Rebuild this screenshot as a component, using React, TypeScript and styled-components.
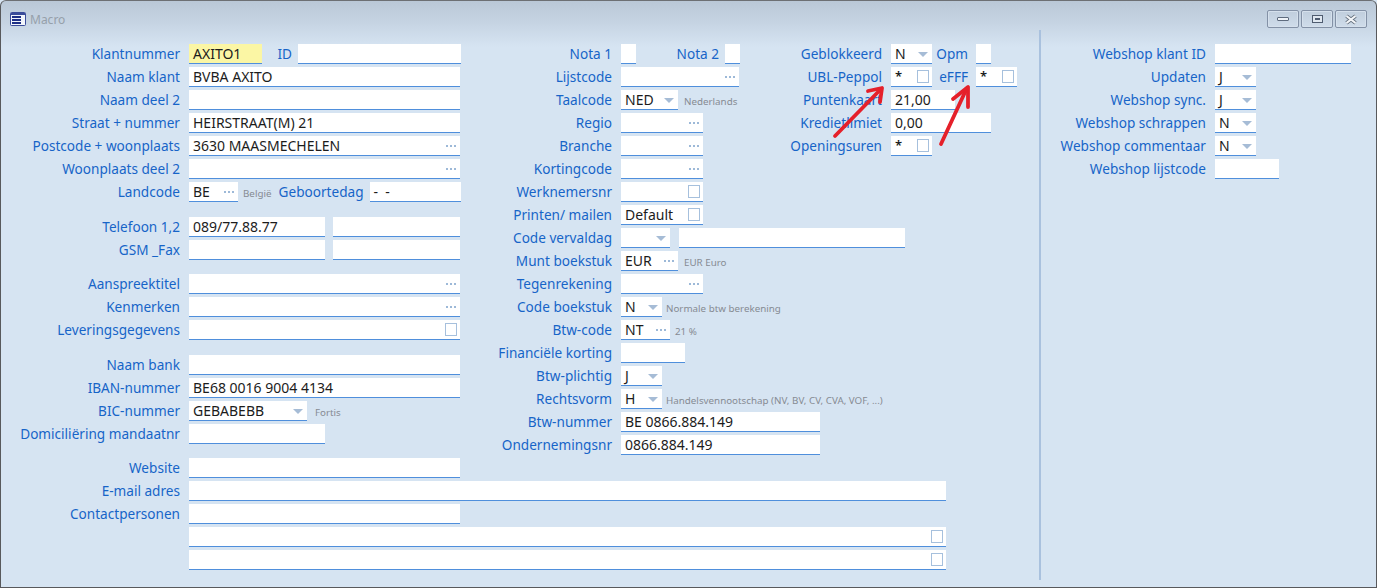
import React, { FunctionComponent, ReactNode } from "react";
import { createGlobalStyle, styled } from "styled-components";

const Global = createGlobalStyle`
  html, body {
    margin: 0;
    padding: 0;
    background: #d6e4f2;
  }
`;

const Window = styled.div`
  position: relative;
  box-sizing: border-box;
  width: 1377px;
  height: 588px;
  overflow: hidden;
  border: 1px solid #58595c;
  border-top-color: #6d7074;
  border-radius: 6px 6px 0 0;
  background: linear-gradient(#bac8d7 0, #c6d4e3 22px, #d6e4f2 46px);
  font-family: "Noto Sans", sans-serif;
  font-size: 13.6px;
`;

const TitleBar = styled.div`
  box-sizing: border-box;
  display: flex;
  align-items: center;
  height: 29px;
  padding: 7px 9px 0;
  gap: 4px;
`;

const Caption = styled.span`
  font-size: 12px;
  color: #96a0aa;
  flex: 1;
`;

const WinButtons = styled.div`
  display: flex;
  gap: 2px;
`;

const WinButton = styled.div`
  box-sizing: border-box;
  display: flex;
  align-items: center;
  justify-content: center;
  width: 32px;
  height: 18px;
  border: 1px solid #8391a6;
  border-radius: 2px;
  background: linear-gradient(#c0cedd, #cfdcea);
  box-shadow: inset 0 0 0 1px #d5e0ec;
`;

const Body = styled.div`
  display: flex;
  align-items: stretch;
  height: 550px;
`;

const FormArea = styled.div`
  display: flex;
  flex-direction: column;
  flex-shrink: 0;
  width: 1038px;
  padding-top: 14px;
  box-sizing: border-box;
`;

const TopColumns = styled.div`
  display: flex;
  margin-bottom: 3px;
`;

const Column = styled.div<{ $w: number }>`
  display: flex;
  flex-direction: column;
  gap: 3px;
  width: ${(p) => p.$w}px;
  flex-shrink: 0;
`;

const Spacer = styled.div<{ $h: number }>`
  height: ${(p) => p.$h}px;
`;

const Divider = styled.div`
  width: 2px;
  flex-shrink: 0;
  background: #a9c1de;
`;

const ShopColumn = styled(Column)`
  padding-top: 14px;
`;

const Row = styled.div`
  display: flex;
  align-items: flex-start;
  height: 20px;
  white-space: nowrap;
`;

const Label = styled.div<{ $w: number; $gap?: number }>`
  width: ${(p) => p.$w}px;
  margin-right: ${(p) => p.$gap ?? 9}px;
  flex-shrink: 0;
  text-align: right;
  line-height: 20px;
  color: #1764c8;
`;

const Field = styled.div<{ $w: number; $tone?: string; $after?: number }>`
  box-sizing: border-box;
  display: flex;
  align-items: center;
  justify-content: space-between;
  flex-shrink: 0;
  width: ${(p) => p.$w}px;
  height: 20px;
  padding: 1px 4px 0;
  margin-right: ${(p) => p.$after ?? 0}px;
  background: ${(p) => p.$tone ?? "#fff"};
  border-bottom: 1px solid #4f8fdc;
  color: #1c1c1c;
  font-size: 14px;
  line-height: 18px;
`;

const Note = styled.span<{ $left: number }>`
  margin-left: ${(p) => p.$left}px;
  padding-top: 3px;
  line-height: 18px;
  font-size: 9.8px;
  color: #868b92;
`;

const Dots = styled.span`
  width: 2px;
  height: 2px;
  margin-right: 8px;
  background: #9db9d8;
  box-shadow: 4px 0 #9db9d8, 8px 0 #9db9d8;
`;

const Caret = styled.span`
  width: 0;
  height: 0;
  border-left: 5px solid transparent;
  border-right: 5px solid transparent;
  border-top: 5px solid #a6bcd6;
`;

const Check = styled.span`
  box-sizing: border-box;
  width: 12px;
  height: 13px;
  margin-top: -1px;
  margin-right: -1px;
  border: 1px solid #a6c0dd;
  background: #fff;
`;

const Star = styled.span`
  align-self: flex-start;
  line-height: 16px;
  font-size: 13px;
  font-weight: 600;
`;

const ArrowLayer = styled.svg`
  position: absolute;
  left: -1px;
  top: -1px;
  pointer-events: none;
`;

type FieldProps = { w: number; value?: string; after?: number };

const DotField: FunctionComponent<FieldProps> = ({ w, value, after }) => (
  <Field $w={w} $after={after}>
    <span>{value}</span>
    <Dots />
  </Field>
);

const SelectField: FunctionComponent<FieldProps> = ({ w, value }) => (
  <Field $w={w}>
    <span>{value}</span>
    <Caret />
  </Field>
);

const CheckField: FunctionComponent<FieldProps> = ({ w, value, after }) => (
  <Field $w={w} $after={after}>
    <span>{value}</span>
    <Check />
  </Field>
);

const StarField: FunctionComponent<{ w: number }> = ({ w }) => (
  <Field $w={w}>
    <Star>*</Star>
    <Check />
  </Field>
);

type RowProps = { text?: string; children?: ReactNode };

const MainRow: FunctionComponent<RowProps> = ({ text, children }) => (
  <Row>
    <Label $w={179}>{text}</Label>
    {children}
  </Row>
);

const MidRow: FunctionComponent<RowProps> = ({ text, children }) => (
  <Row>
    <Label $w={151}>{text}</Label>
    {children}
  </Row>
);

const SideRow: FunctionComponent<RowProps> = ({ text, children }) => (
  <Row>
    <Label $w={102}>{text}</Label>
    {children}
  </Row>
);

const ShopRow: FunctionComponent<RowProps> = ({ text, children }) => (
  <Row>
    <Label $w={165}>{text}</Label>
    {children}
  </Row>
);

const App: FunctionComponent = () => (
  <>
    <Global />
    <Window>
      <TitleBar>
        <svg width="16" height="14" viewBox="0 0 16 14">
          <rect x="0.5" y="0.5" width="15" height="13" rx="1" fill="#f2f5fb" stroke="#3a4c9a" />
          <rect x="1" y="1" width="14" height="2" fill="#3a4c9a" />
          <rect x="2" y="4" width="9" height="2" fill="#1d2f86" />
          <rect x="2" y="7" width="9" height="2" fill="#1d2f86" />
          <rect x="2" y="10" width="9" height="2" fill="#1d2f86" />
        </svg>
        <Caption>Macro</Caption>
        <WinButtons>
          <WinButton>
            <svg width="12" height="4" viewBox="0 0 12 4">
              <rect x="0.5" y="0.5" width="11" height="3" rx="0.5" fill="#eef2f7" stroke="#5e6b7e" />
            </svg>
          </WinButton>
          <WinButton>
            <svg width="11" height="8" viewBox="0 0 11 8">
              <rect x="0.5" y="0.5" width="10" height="7" fill="#dfe7f0" stroke="#4f5c70" />
              <rect x="3" y="3" width="5" height="2" fill="#4f5c70" />
            </svg>
          </WinButton>
          <WinButton>
            <svg width="14" height="11" viewBox="0 0 14 11">
              <path d="M2.5 2 L11.5 9 M11.5 2 L2.5 9" stroke="#66727f" strokeWidth="3.8" />
              <path d="M2.5 2 L11.5 9 M11.5 2 L2.5 9" stroke="#f4f6f9" strokeWidth="2.2" />
            </svg>
          </WinButton>
        </WinButtons>
      </TitleBar>
      <Body>
        <FormArea>
          <TopColumns>
            <Column $w={460}>
              <Row>
                <Label $w={179}>Klantnummer</Label>
                <Field $w={73} $tone="#fbf6a4">AXITO1</Field>
                <Label $w={30} $gap={6}>ID</Label>
                <Field $w={163} />
              </Row>
              <MainRow text="Naam klant"><Field $w={271}>BVBA AXITO</Field></MainRow>
              <MainRow text="Naam deel 2"><Field $w={271} /></MainRow>
              <MainRow text="Straat + nummer"><Field $w={271}>HEIRSTRAAT(M) 21</Field></MainRow>
              <MainRow text="Postcode + woonplaats"><DotField w={271} value="3630 MAASMECHELEN" /></MainRow>
              <MainRow text="Woonplaats deel 2"><DotField w={271} /></MainRow>
              <MainRow text="Landcode">
                <DotField w={49} value="BE" />
                <Note $left={5}>België</Note>
                <Label $w={92} $gap={6}>Geboortedag</Label>
                <Field $w={91}>-&nbsp;&nbsp;-</Field>
              </MainRow>
              <Spacer $h={9} />
              <MainRow text="Telefoon 1,2">
                <Field $w={136} $after={8}>089/77.88.77</Field>
                <Field $w={127} />
              </MainRow>
              <MainRow text="GSM _Fax">
                <Field $w={136} $after={8} />
                <Field $w={127} />
              </MainRow>
              <Spacer $h={8} />
              <MainRow text="Aanspreektitel"><DotField w={271} /></MainRow>
              <MainRow text="Kenmerken"><DotField w={271} /></MainRow>
              <MainRow text="Leveringsgegevens"><CheckField w={271} /></MainRow>
              <Spacer $h={9} />
              <MainRow text="Naam bank"><Field $w={271} /></MainRow>
              <MainRow text="IBAN-nummer"><Field $w={271}>BE68 0016 9004 4134</Field></MainRow>
              <MainRow text="BIC-nummer">
                <SelectField w={118} value="GEBABEBB" />
                <Note $left={8}>Fortis</Note>
              </MainRow>
              <MainRow text="Domiciliëring mandaatnr"><Field $w={136} /></MainRow>
            </Column>
            <Column $w={319}>
              <Row>
                <Label $w={151}>Nota 1</Label>
                <Field $w={15} />
                <Label $w={83} $gap={6}>Nota 2</Label>
                <Field $w={15} />
              </Row>
              <MidRow text="Lijstcode"><DotField w={118} /></MidRow>
              <MidRow text="Taalcode">
                <SelectField w={57} value="NED" />
                <Note $left={6}>Nederlands</Note>
              </MidRow>
              <MidRow text="Regio"><DotField w={82} /></MidRow>
              <MidRow text="Branche"><DotField w={82} /></MidRow>
              <MidRow text="Kortingcode"><DotField w={82} /></MidRow>
              <MidRow text="Werknemersnr"><CheckField w={82} /></MidRow>
              <MidRow text="Printen/ mailen"><CheckField w={82} value="Default" /></MidRow>
              <MidRow text="Code vervaldag">
                <Field $w={49} $after={9}><span /><Caret /></Field>
                <Field $w={226} />
              </MidRow>
              <MidRow text="Munt boekstuk">
                <DotField w={57} value="EUR" />
                <Note $left={6}>EUR Euro</Note>
              </MidRow>
              <MidRow text="Tegenrekening"><DotField w={82} /></MidRow>
              <MidRow text="Code boekstuk">
                <SelectField w={41} value="N" />
                <Note $left={4}>Normale btw berekening</Note>
              </MidRow>
              <MidRow text="Btw-code">
                <DotField w={49} value="NT" />
                <Note $left={5}>21 %</Note>
              </MidRow>
              <MidRow text="Financiële korting"><Field $w={64} /></MidRow>
              <MidRow text="Btw-plichtig"><SelectField w={41} value="J" /></MidRow>
              <MidRow text="Rechtsvorm">
                <SelectField w={41} value="H" />
                <Note $left={4}>Handelsvennootschap (NV, BV, CV, CVA, VOF, ...)</Note>
              </MidRow>
              <MidRow text="Btw-nummer"><Field $w={199}>BE 0866.884.149</Field></MidRow>
              <MidRow text="Ondernemingsnr"><Field $w={199}>0866.884.149</Field></MidRow>
            </Column>
            <Column $w={259}>
              <Row>
                <Label $w={102}>Geblokkeerd</Label>
                <SelectField w={41} value="N" />
                <Label $w={36} $gap={8}>Opm</Label>
                <Field $w={15} />
              </Row>
              <Row>
                <Label $w={102}>UBL-Peppol</Label>
                <StarField w={41} />
                <Label $w={36} $gap={8}>eFFF</Label>
                <StarField w={41} />
              </Row>
              <SideRow text="Puntenkaart"><Field $w={64}>21,00</Field></SideRow>
              <SideRow text="Kredietlimiet"><Field $w={100}>0,00</Field></SideRow>
              <SideRow text="Openingsuren"><StarField w={41} /></SideRow>
            </Column>
          </TopColumns>
          <Column $w={1038}>
            <MainRow text="Website"><Field $w={271} /></MainRow>
            <MainRow text="E-mail adres"><Field $w={757} /></MainRow>
            <MainRow text="Contactpersonen"><Field $w={271} /></MainRow>
            <MainRow><CheckField w={757} /></MainRow>
            <MainRow><CheckField w={757} /></MainRow>
          </Column>
        </FormArea>
        <Divider />
        <ShopColumn $w={334}>
          <ShopRow text="Webshop klant ID"><Field $w={136} /></ShopRow>
          <ShopRow text="Updaten"><SelectField w={41} value="J" /></ShopRow>
          <ShopRow text="Webshop sync."><SelectField w={41} value="J" /></ShopRow>
          <ShopRow text="Webshop schrappen"><SelectField w={41} value="N" /></ShopRow>
          <ShopRow text="Webshop commentaar"><SelectField w={41} value="N" /></ShopRow>
          <ShopRow text="Webshop lijstcode"><Field $w={64} /></ShopRow>
        </ShopColumn>
      </Body>
      <ArrowLayer width="1377" height="588" viewBox="0 0 1377 588">
        <g fill="none" stroke="#e5202a" strokeWidth="3.8" strokeLinecap="round" strokeLinejoin="round">
          <path d="M835 136 L880 90" />
          <path d="M868 91 L882 88 L880 102" />
          <path d="M941 144 L966 90" />
          <path d="M953 99 L968 87 L968 107" />
        </g>
      </ArrowLayer>
    </Window>
  </>
);

export default App;
